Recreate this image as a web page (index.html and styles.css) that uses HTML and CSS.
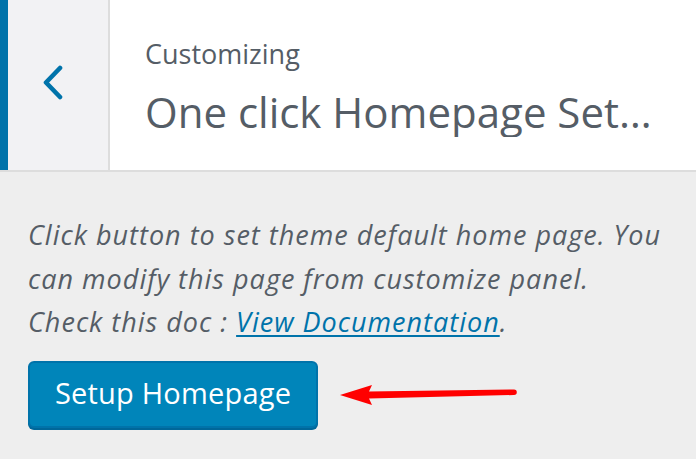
FILE: index.html
```html
<!DOCTYPE html>
<html lang="en">
<head>
<meta charset="utf-8">
<title>Customizing – One click Homepage Setup</title>
<link rel="stylesheet" href="styles.css">
</head>
<body>
<div class="customizer">
  <header class="panel-header">
    <button class="back-btn" aria-label="Back">
      <svg class="chevron" width="22" height="36" viewBox="0 0 22 36" aria-hidden="true">
        <polyline points="17,3 3,17.5 17,32" fill="none" stroke="#0073aa" stroke-width="4.6" stroke-linecap="round" stroke-linejoin="round"/>
      </svg>
    </button>
    <div class="panel-title">
      <span class="action">Customizing</span>
      <h3 class="title">One click Homepage Setup</h3>
    </div>
  </header>
  <section class="panel-body">
    <p class="description">Click button to set theme default home page. You can modify this page from customize panel. Check this doc : <a href="#" class="doc-link">View Documentation</a>.</p>
    <div class="action-row">
      <button class="setup-btn">Setup Homepage</button>
      <svg class="pointer-arrow" width="178" height="24" viewBox="0 0 178 24" aria-hidden="true">
        <path d="M1 12 L33 2 L30 8.6 L175 6.4 A2.8 2.8 0 0 1 175 12 L30 15.6 L33 22 Z" fill="#ff0000"/>
      </svg>
    </div>
  </section>
</div>
</body>
</html>
```
FILE: styles.css
```css
* { box-sizing: border-box; }

html, body {
  margin: 0;
  padding: 0;
  background: #eeeeee;
  width: 696px;
  height: 459px;
  overflow: hidden;
  font-family: "Open Sans", "Noto Sans", "DejaVu Sans", sans-serif;
  color: #555d66;
}

.customizer {
  display: flex;
  flex-direction: column;
  height: 459px;
}

.panel-header {
  display: flex;
  height: 172px;
  background: #ffffff;
  border-bottom: 2px solid #dddddd;
}

.back-btn {
  flex: 0 0 110px;
  display: flex;
  align-items: center;
  justify-content: flex-start;
  padding: 0 0 4px 35px;
  margin: 0;
  background: #f2f2f4;
  border: 0;
  border-left: 8px solid #0073aa;
  border-right: 2px solid #dddddd;
  cursor: pointer;
}

.chevron { display: block; }

.panel-title {
  flex: 1 1 auto;
  min-width: 0;
  display: flex;
  flex-direction: column;
  padding: 38px 32px 0 35px;
}

.action {
  font-size: 27px;
  line-height: 32px;
  color: #555d66;
}

.title {
  margin: 17px 0 0;
  font-size: 42px;
  line-height: 50px;
  font-weight: 400;
  color: #555d66;
  white-space: nowrap;
  overflow: hidden;
  text-overflow: ellipsis;
}

.panel-body {
  padding: 41px 30px 0 28px;
}

.description {
  margin: 0;
  font-size: 27px;
  letter-spacing: 1px;
  line-height: 43.5px;
  font-style: italic;
  color: #555d66;
}

.doc-link {
  color: #0073aa;
  text-decoration: underline;
  text-underline-offset: 3px;
}

.action-row {
  display: flex;
  align-items: center;
  gap: 21px;
  margin-top: 17px;
}

.setup-btn {
  height: 67px;
  padding: 0 25px 3px;
  font-family: inherit;
  font-size: 29px;
  letter-spacing: 0.2px;
  color: #ffffff;
  background: #0085ba;
  border: 2px solid #0073aa;
  border-radius: 6px;
  box-shadow: 0 2px 0 #006799;
  cursor: pointer;
}

.pointer-arrow { display: block; margin-top: 2px; }
```
